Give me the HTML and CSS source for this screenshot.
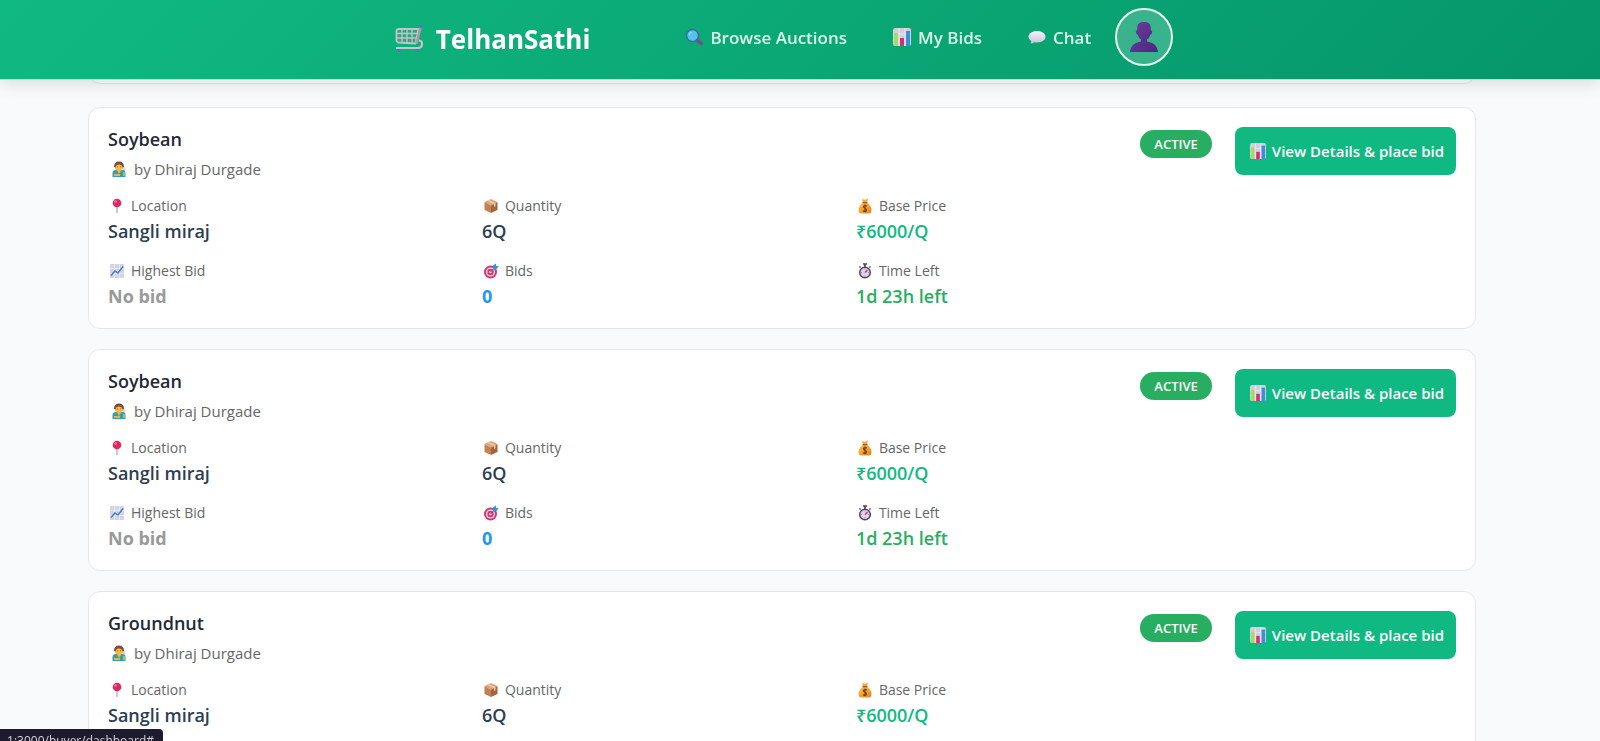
FILE: index.html
```html
<!DOCTYPE html>
<html lang="en">
<head>
  <meta charset="UTF-8" />
  <meta name="viewport" content="width=device-width, initial-scale=1.0" />
  <title>Buyer Dashboard - TelhanSathi</title>
  <link rel="stylesheet" href="styles.css">
</head>
<body>

  <!-- icon sprite -->
  <svg class="sprite" aria-hidden="true">
    <defs>
      <linearGradient id="g-user" x1="0" y1="0" x2="1" y2="1">
        <stop offset="0" stop-color="#6a3f9c" />
        <stop offset="1" stop-color="#4d2480" />
      </linearGradient>
      <linearGradient id="g-chat" x1="0" y1="0" x2="0" y2="1">
        <stop offset="0" stop-color="#f4f1fa" />
        <stop offset="1" stop-color="#c9c3da" />
      </linearGradient>
      <linearGradient id="g-bag" x1="0" y1="0" x2="1" y2="1">
        <stop offset="0" stop-color="#ffc247" />
        <stop offset="1" stop-color="#e8801c" />
      </linearGradient>
    </defs>
    <symbol id="i-cart" viewBox="0 0 28 28">
      <path d="M3.500 4H23.500L20.500 18.500L3 17.500Q1.500 17 1.500 15V6Q1.500 4 3.500 4Z" fill="#5f9c88" fill-opacity=".4" stroke="#c6c2ca" stroke-width="1.800" stroke-linejoin="round" />
      <path d="M7 4V18M12 4V18M17 4V18M1.500 8.500H23M1.500 13H22" fill="none" stroke="#c6c2ca" stroke-width="1.300" />
      <path d="M25.500 2.500L21.500 18.500" stroke="#a89ca6" stroke-width="2.600" />
      <path d="M24 15.500Q27.500 16 27 19.500Q26.500 23 23 23H1" fill="none" stroke="#c9c5cf" stroke-width="2" />
      <path d="M24 2L28 1" stroke="#3c7fc4" stroke-width="2.200" />
      <circle cx="4" cy="25.500" r="1.600" fill="#3c7fc4" />
      <circle cx="22" cy="25.500" r="1.600" fill="#3c7fc4" />
    </symbol>
    <symbol id="i-search" viewBox="0 0 18 18">
      <path d="M11.500 11.500L16 15.500" stroke="#7d4a86" stroke-width="3.400" stroke-linecap="round" />
      <circle cx="7.500" cy="7.500" r="6" fill="#55c3ea" stroke="#3a70a0" stroke-width="1.600" />
      <path d="M4 7Q4.500 4.500 7 4" stroke="#9be2f7" fill="none" stroke-width="1" />
    </symbol>
    <symbol id="i-chart" viewBox="0 0 18 18">
      <rect width="18" height="18" rx="2" fill="#d3cddd" />
      <path d="M0 6H18M0 12H18M6 0V18M12 0V18" stroke="#ece8f2" stroke-width="1" />
      <rect x="1" y="5" width="4" height="13" fill="#a4d96c" />
      <rect x="7" y="10" width="4" height="8" fill="#d62f6b" />
      <rect x="13" y="3" width="4" height="15" fill="#3a8fdd" />
    </symbol>
    <symbol id="i-chat" viewBox="0 0 18 18">
      <path d="M9 3C14 3 17.500 5.500 17.500 8.800S14 14.500 9 14.500Q7.500 14.500 6 14.200Q4.500 15.500 2.500 15.500Q3.500 14.500 3.200 13Q.5 11.500 .5 8.800C.5 5.500 4 3 9 3Z" fill="url(#g-chat)" />
    </symbol>
    <symbol id="i-user" viewBox="0 0 28 30">
      <path d="M14 0C18 0 20.500 1.500 20.700 5V8Q22.800 8.500 22 11Q21.500 12.500 20.500 12.500Q19.500 16 17 17.500V19.500C22 20.500 27 22 28 30H0C1 22 6 20.500 11 19.500V17.500Q8.500 16 7.500 12.500Q6.500 12.500 6 11Q5.200 8.500 7.300 8V5C7.500 1.500 10 0 14 0Z" fill="url(#g-user)" />
    </symbol>
    <symbol id="i-farmer" viewBox="0 0 16 16">
      <path d="M12.500 5L14.500 8L13.500 11H11.500V7Z" fill="#e2c7e6" />
      <path d="M1.500 16V12Q1.500 9 5 9H11Q14.500 9 14.500 12V16Z" fill="#2fa0b5" />
      <path d="M6 9L8 13L10.500 9Z" fill="#f5b53c" />
      <path d="M3 13H9V15H3Z" fill="#f3b13b" />
      <path d="M12 11H14V15H12Z" fill="#93c65a" />
      <circle cx="8" cy="5.800" r="4" fill="#fbbb3d" />
      <path d="M3 6Q3 .5 8 .5T13 6L11.500 6.500Q11 3.500 8 3.500T4.500 6.500Z" fill="#804a3e" />
      <path d="M6.500 5.500V6.300M9.500 5.500V6.300" stroke="#5a3a2e" stroke-width=".8" />
    </symbol>
    <symbol id="i-pin" viewBox="0 0 16 16">
      <path d="M8 8V15" stroke="#a9a3ae" stroke-width="1.200" />
      <circle cx="8" cy="5" r="4.300" fill="#e0285f" />
      <circle cx="6.500" cy="3.500" r="1.300" fill="#f5799c" />
    </symbol>
    <symbol id="i-box" viewBox="0 0 16 16">
      <path d="M8 1L14.500 4L8 7.500L1.500 4Z" fill="#dba67b" />
      <path d="M1.500 4L8 7.500V15L1.500 12Z" fill="#c48254" />
      <path d="M14.500 4L8 7.500V15L14.500 12Z" fill="#a5653c" />
      <path d="M4 2.800L11 6.300V9L12.500 8.200V5.200L6 1.900Z" fill="#efc9a4" />
    </symbol>
    <symbol id="i-bag" viewBox="0 0 16 16">
      <path d="M5 1Q8 2.500 11 .5L10 4.500H6Z" fill="#f7a92f" />
      <path d="M6 5H10Q14.500 8 14.500 12Q14.500 15.500 11.500 15.500H4.500Q1.500 15.500 1.500 12Q1.500 8 6 5Z" fill="url(#g-bag)" />
      <path d="M5.500 4.700H10.500" stroke="#9c4a2a" stroke-width="1.200" />
      <path d="M10 8Q8 7 6.800 8T8 10.300T9 13Q7.500 13.800 6 12.800M8 6.500V14.300" fill="none" stroke="#6e3a1d" stroke-width="1.100" />
    </symbol>
    <symbol id="i-trend" viewBox="0 0 16 16">
      <rect x="1" y="1" width="14" height="14" rx="1" fill="#d8d2e6" />
      <path d="M1 5.500H15M1 10.500H15M5.500 1V15M10.500 1V15" stroke="#eeebf5" stroke-width=".8" />
      <path d="M2 12.500L6 8L9 10L14 3.500" fill="none" stroke="#3d84c6" stroke-width="1.500" />
    </symbol>
    <symbol id="i-target" viewBox="0 0 16 16">
      <circle cx="7.500" cy="9" r="6.500" fill="#d9346c" />
      <circle cx="7.500" cy="9" r="4.600" fill="#f3dbe8" />
      <circle cx="7.500" cy="9" r="3.200" fill="#d9346c" />
      <circle cx="7.500" cy="9" r="1.300" fill="#f3dbe8" />
      <path d="M7.500 9L12.500 4" stroke="#6a4a9a" stroke-width="1" />
      <path d="M10 6V2.500L13 .5V3L15.800 3.200L13.500 6Z" fill="#2f93e0" />
    </symbol>
    <symbol id="i-timer" viewBox="0 0 16 16">
      <path d="M6 1H10M8 1V4M12.500 3.500L13.500 4.500M3.500 3.500L2.500 4.500" stroke="#4e4159" stroke-width="1.700" />
      <circle cx="8" cy="9.500" r="5.300" fill="#ddd3ea" stroke="#544663" stroke-width="1.500" />
      <path d="M8 9.500L10.500 7" stroke="#c22f6a" stroke-width="1.200" />
      <path d="M8 5.500V6.500M8 12.500V13.500M4 9.500H5M11 9.500H12" stroke="#80709a" stroke-width=".8" />
    </symbol>
  </svg>

  <header class="navbar">
    <a class="brand" href="#">
      <svg class="brand-icon"><use href="#i-cart" /></svg>
      TelhanSathi
    </a>
    <nav class="nav-links">
      <a href="#"><svg class="nav-icon"><use href="#i-search" /></svg>Browse Auctions</a>
      <a href="#"><svg class="nav-icon"><use href="#i-chart" /></svg>My Bids</a>
      <a href="#"><svg class="nav-icon"><use href="#i-chat" /></svg>Chat</a>
    </nav>
    <button class="avatar" aria-label="Profile"><svg><use href="#i-user" /></svg></button>
  </header>

  <main class="dashboard">
    <section class="filter-panel"></section>
    <section class="auction-list" id="auction-list"></section>
  </main>

  <div class="status-bar"><span>.1:3000/buyer/dashboard#</span></div>

  <script>
    const auctions = [
      { crop: 'Soybean', seller: 'Dhiraj Durgade', location: 'Sangli miraj', quantity: '6Q', price: '₹6000/Q', bids: 0, left: '1d 23h left' },
      { crop: 'Soybean', seller: 'Dhiraj Durgade', location: 'Sangli miraj', quantity: '6Q', price: '₹6000/Q', bids: 0, left: '1d 23h left' },
      { crop: 'Groundnut', seller: 'Dhiraj Durgade', location: 'Sangli miraj', quantity: '6Q', price: '₹6000/Q', bids: 0, left: '1d 23h left' }
    ];

    function detail(icon, label, value, cls) {
      return `
        <div class="detail">
          <dt><svg class="icon"><use href="#i-${icon}" /></svg>${label}</dt>
          <dd class="${cls}">${value}</dd>
        </div>`;
    }

    const list = document.getElementById('auction-list');

    auctions.forEach(a => {
      const card = document.createElement('article');
      card.className = 'auction-card';
      card.innerHTML = `
        <div class="auction-info">
          <div class="auction-head">
            <div>
              <h3>${a.crop}</h3>
              <p class="seller"><svg class="icon"><use href="#i-farmer" /></svg>by ${a.seller}</p>
            </div>
            <span class="badge">ACTIVE</span>
          </div>
          <dl class="details">
            ${detail('pin', 'Location', a.location, 'plain')}
            ${detail('box', 'Quantity', a.quantity, 'plain')}
            ${detail('bag', 'Base Price', a.price, 'price')}
            ${detail('trend', 'Highest Bid', 'No bid', 'no-bid')}
            ${detail('target', 'Bids', a.bids, 'bids')}
            ${detail('timer', 'Time Left', a.left, 'time')}
          </dl>
        </div>
        <button class="btn-bid"><svg class="icon"><use href="#i-chart" /></svg>View Details &amp; place bid</button>`;
      list.appendChild(card);
    });
  </script>
</body>
</html>
```
FILE: styles.css
```css
* {
  box-sizing: border-box;
  margin: 0;
  padding: 0;
}
body {
  font-family: 'Segoe UI', 'Open Sans', 'Noto Sans', sans-serif;
  background-color: #f8fafc;
  color: #2c3e50;
  height: 100vh;
  overflow: hidden;
}
.sprite {
  position: absolute;
  width: 0;
  height: 0;
}

/* navbar */
.navbar {
  position: fixed;
  top: 0;
  left: 0;
  right: 0;
  z-index: 10;
  height: 80px;
  padding: 0 32px 5px 0;
  display: flex;
  align-items: center;
  justify-content: center;
  background: linear-gradient(135deg, #10b981 0%, #059669 100%);
  border-bottom: 1px solid #a7e8cf;
  box-shadow: 0 4px 16px rgba(0, 0, 0, 0.12);
}
.brand {
  display: flex;
  align-items: center;
  gap: 13px;
  margin-right: 95px;
  padding-top: 3px;
  color: white;
  font-size: 26px;
  font-weight: 700;
  text-decoration: none;
}
.brand-icon {
  width: 28px;
  height: 28px;
}
.nav-links {
  display: flex;
  gap: 46px;
  margin-right: 24px;
}
.nav-links a {
  display: flex;
  align-items: center;
  gap: 7px;
  color: #dcf8ec;
  font-size: 17px;
  font-weight: 600;
  text-decoration: none;
}
.nav-icon {
  width: 18px;
  height: 18px;
}
.avatar {
  display: flex;
  align-items: center;
  justify-content: center;
  width: 58px;
  height: 58px;
  border: 2px solid #e6f8f0;
  border-radius: 50%;
  background: rgba(255, 255, 255, 0.2);
  cursor: pointer;
}
.avatar svg {
  width: 28px;
  height: 30px;
}

/* page content, starts under the navbar */
.dashboard {
  padding: 0 124px 40px 88px;
}
.filter-panel {
  height: 84px;
  margin-bottom: 23px;
  background: white;
  border: 1px solid #e5e7eb;
  border-radius: 12px;
}
.auction-list {
  display: flex;
  flex-direction: column;
  gap: 20px;
}
.auction-card {
  display: flex;
  align-items: flex-start;
  gap: 23px;
  padding: 19px;
  background: white;
  border: 1px solid #e5e7eb;
  border-radius: 12px;
}
.auction-info {
  flex: 1;
}
.auction-head {
  display: flex;
  justify-content: space-between;
  align-items: flex-start;
  margin-bottom: 16px;
}
h3 {
  color: #1f2937;
  font-size: 18px;
  font-weight: 600;
  line-height: 24px;
  margin-bottom: 7px;
}
.seller {
  display: flex;
  align-items: center;
  gap: 7px;
  padding-left: 3px;
  color: #666;
  font-size: 15px;
  line-height: 22px;
}
.icon {
  width: 16px;
  height: 16px;
}
.badge {
  margin-top: 3px;
  padding: 0 14px;
  border-radius: 14px;
  background: #27ae60;
  color: white;
  font-size: 13px;
  font-weight: 600;
  line-height: 28px;
}
.details {
  display: grid;
  grid-template-columns: repeat(3, 1fr);
  gap: 17px 18px;
}
.detail dt {
  display: flex;
  align-items: center;
  gap: 6px;
  padding-left: 1px;
  color: #666;
  font-size: 14px;
  line-height: 20px;
  margin-bottom: 2px;
}
.detail dd {
  font-size: 18px;
  font-weight: 600;
  line-height: 26px;
}
.price {
  color: #10b981;
}
.no-bid {
  color: #999;
}
.bids {
  color: #2196f3;
}
.time {
  color: #27ae60;
}
.detail .no-bid,
.detail .bids {
  font-weight: 700;
}
.btn-bid {
  display: flex;
  align-items: center;
  gap: 6px;
  height: 48px;
  padding: 0 12px 0 15px;
  border: none;
  border-radius: 8px;
  background-color: #10b981;
  color: white;
  font-family: inherit;
  font-size: 15px;
  font-weight: 600;
  cursor: pointer;
}

/* link preview in the window corner */
.status-bar {
  position: fixed;
  left: 0;
  bottom: -12px;
  z-index: 20;
  display: flex;
  justify-content: flex-end;
  width: 163px;
  padding-right: 9px;
  overflow: hidden;
  border-radius: 0 4px 0 0;
  background: #1f1b2e;
  color: #d5d2de;
  font-size: 12px;
  line-height: 24px;
  white-space: nowrap;
}
```
